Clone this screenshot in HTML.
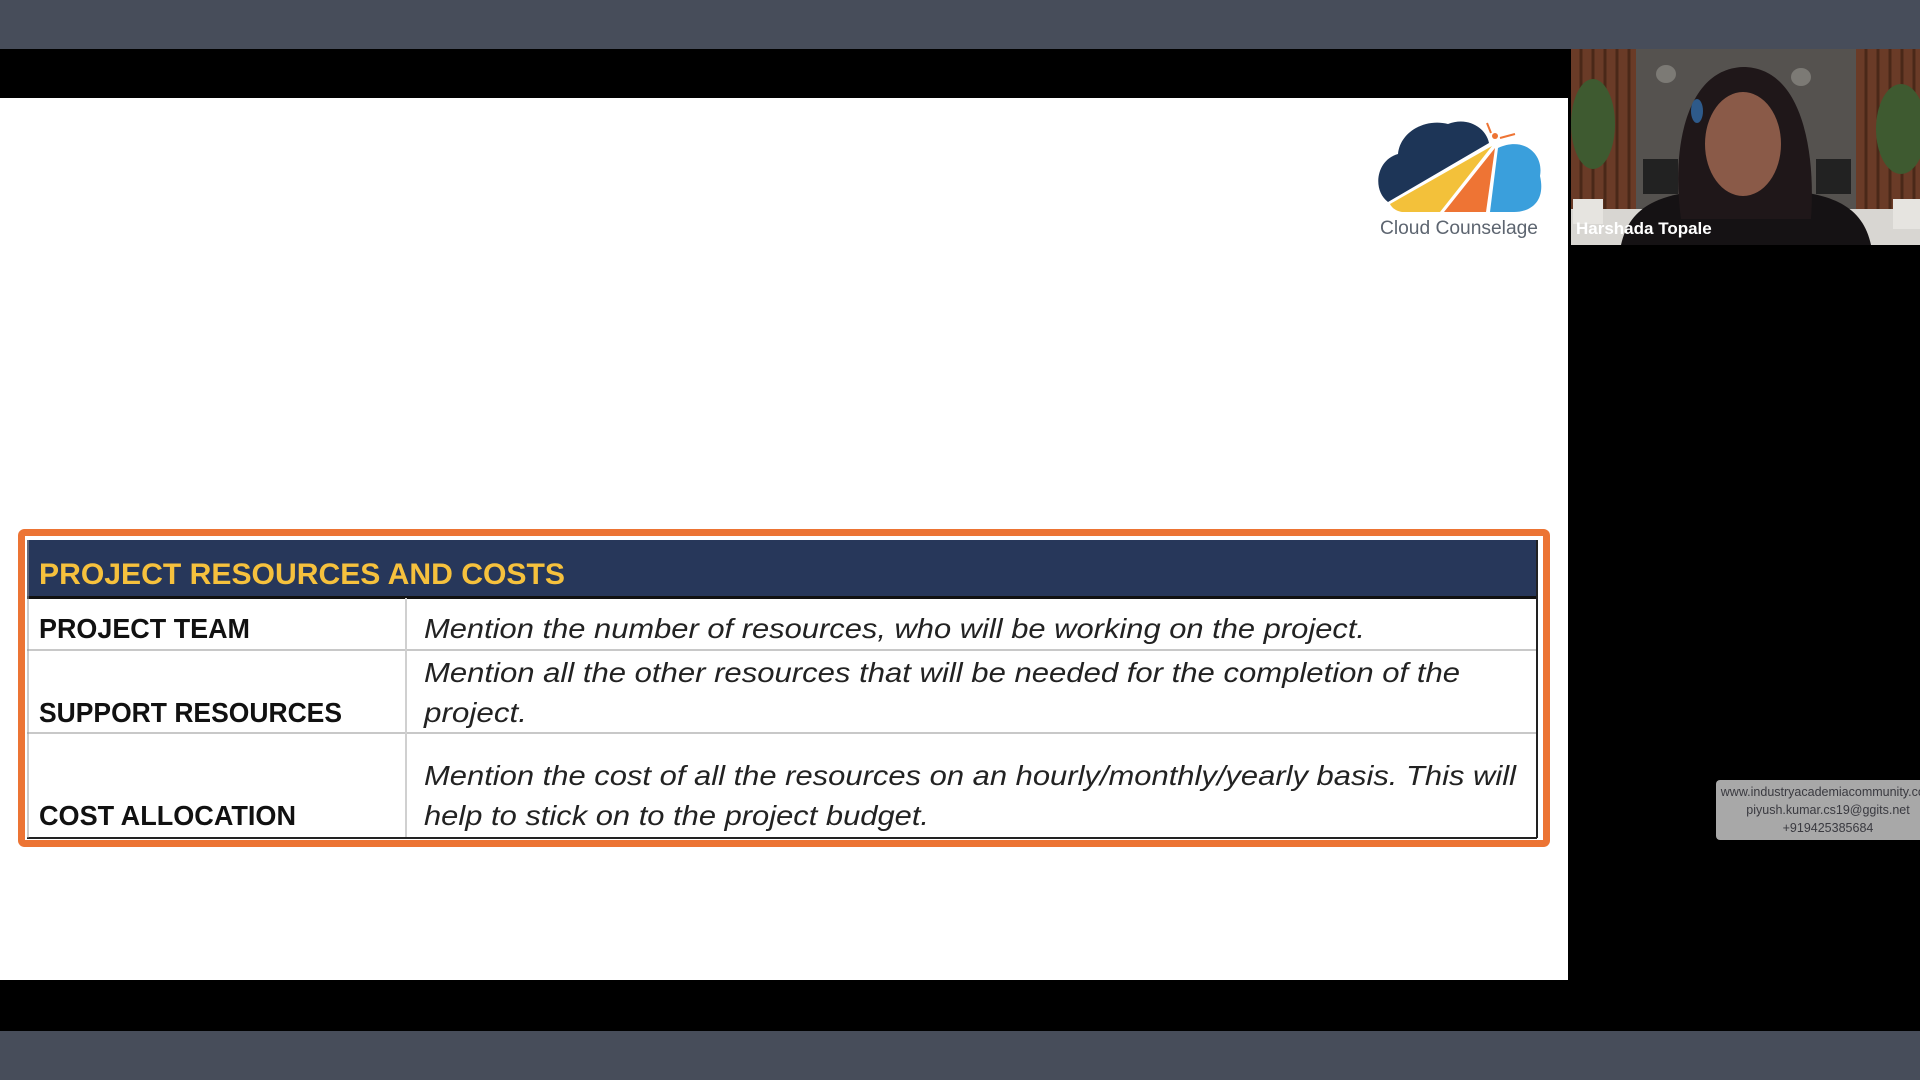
<!DOCTYPE html>
<html><head><meta charset="utf-8"><style>
html,body{margin:0;padding:0;background:#000;width:1920px;height:1080px;overflow:hidden}
svg{display:block}
</style></head><body>
<svg width="1920" height="1080" viewBox="0 0 1920 1080" xmlns="http://www.w3.org/2000/svg">
<rect x="0" y="0" width="1920" height="1080" fill="#000"/>
<rect x="0" y="0" width="1920" height="49" fill="#474d5a"/>
<rect x="0" y="1031" width="1920" height="49" fill="#474d5a"/>
<rect x="0" y="98" width="1568" height="882" fill="#fff"/>

<g transform="translate(1370,110)">
  <path d="M18,92 C2,80 6,50 28,44 C30,22 55,8 78,14 C98,6 116,18 119,33 Z" fill="#1d3557"/>
  <path d="M20,94 L122,36 L70,102 L32,102 C26,101 22,98 20,94 Z" fill="#f3c13a"/>
  <path d="M125,38 L116,102 L74,102 Z" fill="#ee7434"/>
  <path d="M128,38 C154,26 174,44 170,66 C176,92 160,102 144,102 L120,102 Z" fill="#3a9fdc"/>
  <circle cx="125" cy="26" r="3" fill="#ee7434"/>
  <path d="M117,13 L121,23 M130,28 L145,24" stroke="#ee7434" stroke-width="2"/>
  <text x="10" y="124" font-family="Liberation Sans, sans-serif" font-size="19" fill="#5d6570" textLength="158" lengthAdjust="spacingAndGlyphs">Cloud Counselage</text>
</g>

<rect x="21.5" y="532.5" width="1525" height="311" fill="#fff" stroke="#ec7434" stroke-width="7" rx="3"/>
<rect x="27" y="540" width="1511" height="58" fill="#27375a"/>
<rect x="27" y="596" width="1511" height="3" fill="#111"/>
<line x1="27" y1="650" x2="1537" y2="650" stroke="#c8c8c8" stroke-width="2"/>
<line x1="27" y1="733" x2="1537" y2="733" stroke="#c8c8c8" stroke-width="2"/>
<line x1="406" y1="598" x2="406" y2="838" stroke="#d0d0d0" stroke-width="2"/>
<line x1="27" y1="838" x2="1537" y2="838" stroke="#222" stroke-width="2"/>
<line x1="1537" y1="540" x2="1537" y2="838" stroke="#222" stroke-width="2"/>
<line x1="28" y1="540" x2="28" y2="838" stroke="#999" stroke-width="1"/>
<g font-family="Liberation Sans, sans-serif" font-size="28">
<text x="39" y="584" fill="#f6c13d" font-weight="bold" font-size="30" textLength="526" lengthAdjust="spacingAndGlyphs">PROJECT RESOURCES AND COSTS</text>
<text x="39" y="638" fill="#111" font-weight="bold" textLength="211" lengthAdjust="spacingAndGlyphs">PROJECT TEAM</text>
<text x="39" y="722" fill="#111" font-weight="bold" textLength="303" lengthAdjust="spacingAndGlyphs">SUPPORT RESOURCES</text>
<text x="39" y="825" fill="#111" font-weight="bold" textLength="257" lengthAdjust="spacingAndGlyphs">COST ALLOCATION</text>
<g font-style="italic" fill="#222">
<text x="424" y="638" textLength="941" lengthAdjust="spacingAndGlyphs">Mention the number of resources, who will be working on the project.</text>
<text x="424" y="682" textLength="1036" lengthAdjust="spacingAndGlyphs">Mention all the other resources that will be needed for the completion of the</text>
<text x="424" y="722" textLength="103" lengthAdjust="spacingAndGlyphs">project.</text>
<text x="424" y="785" textLength="1092" lengthAdjust="spacingAndGlyphs">Mention the cost of all the resources on an hourly/monthly/yearly basis. This will</text>
<text x="424" y="825" textLength="505" lengthAdjust="spacingAndGlyphs">help to stick on to the project budget.</text>
</g>
</g>

<g transform="translate(1571,49)">
  <rect width="349" height="196" fill="#4a4440"/>
  <rect x="65" width="220" height="160" fill="#55524f"/>
  <ellipse cx="95" cy="25" rx="10" ry="9" fill="#7c7a75"/>
  <ellipse cx="230" cy="28" rx="10" ry="9" fill="#7c7a75"/>
  <rect x="0" width="65" height="165" fill="#6a3b27"/>
  <rect x="285" width="64" height="165" fill="#6a3b27"/>
  <g stroke="#4a2818" stroke-width="3">
    <line x1="10" y1="0" x2="10" y2="160"/><line x1="22" y1="0" x2="22" y2="160"/><line x1="34" y1="0" x2="34" y2="160"/><line x1="46" y1="0" x2="46" y2="160"/><line x1="58" y1="0" x2="58" y2="160"/>
    <line x1="295" y1="0" x2="295" y2="160"/><line x1="307" y1="0" x2="307" y2="160"/><line x1="319" y1="0" x2="319" y2="160"/><line x1="331" y1="0" x2="331" y2="160"/><line x1="343" y1="0" x2="343" y2="160"/>
  </g>
  <rect x="72" y="110" width="35" height="35" fill="#222"/>
  <rect x="245" y="110" width="35" height="35" fill="#222"/>
  <ellipse cx="22" cy="75" rx="22" ry="45" fill="#3e5a30"/>
  <ellipse cx="330" cy="80" rx="25" ry="45" fill="#3e5a30"/>
  <rect x="0" y="160" width="349" height="36" fill="#d8d6d2"/>
  <rect x="2" y="150" width="30" height="25" fill="#e6e4e0"/>
  <rect x="322" y="150" width="27" height="30" fill="#e6e4e0"/>
  <path d="M50,196 C60,150 100,140 175,140 C250,140 290,150 300,196 Z" fill="#151214"/>
  <path d="M110,170 C100,100 115,20 172,18 C230,18 245,100 240,170 Z" fill="#1f1719"/>
  <ellipse cx="172" cy="95" rx="38" ry="52" fill="#8a5a48"/>
  <ellipse cx="126" cy="62" rx="6" ry="12" fill="#2e5a8a"/>
  <text x="5" y="185" font-family="Liberation Sans, sans-serif" font-size="17" font-weight="bold" fill="#fff">Harshada Topale</text>
</g>

<rect x="1716" y="780" width="214" height="60" rx="4" fill="#a8a8a8"/>
<g font-family="Liberation Sans, sans-serif" font-size="12.5" fill="#3a3a40" text-anchor="middle">
<text x="1828" y="796">www.industryacademiacommunity.com</text>
<text x="1828" y="814">piyush.kumar.cs19@ggits.net</text>
<text x="1828" y="832">+919425385684</text>
</g>
</svg>
</body></html>
